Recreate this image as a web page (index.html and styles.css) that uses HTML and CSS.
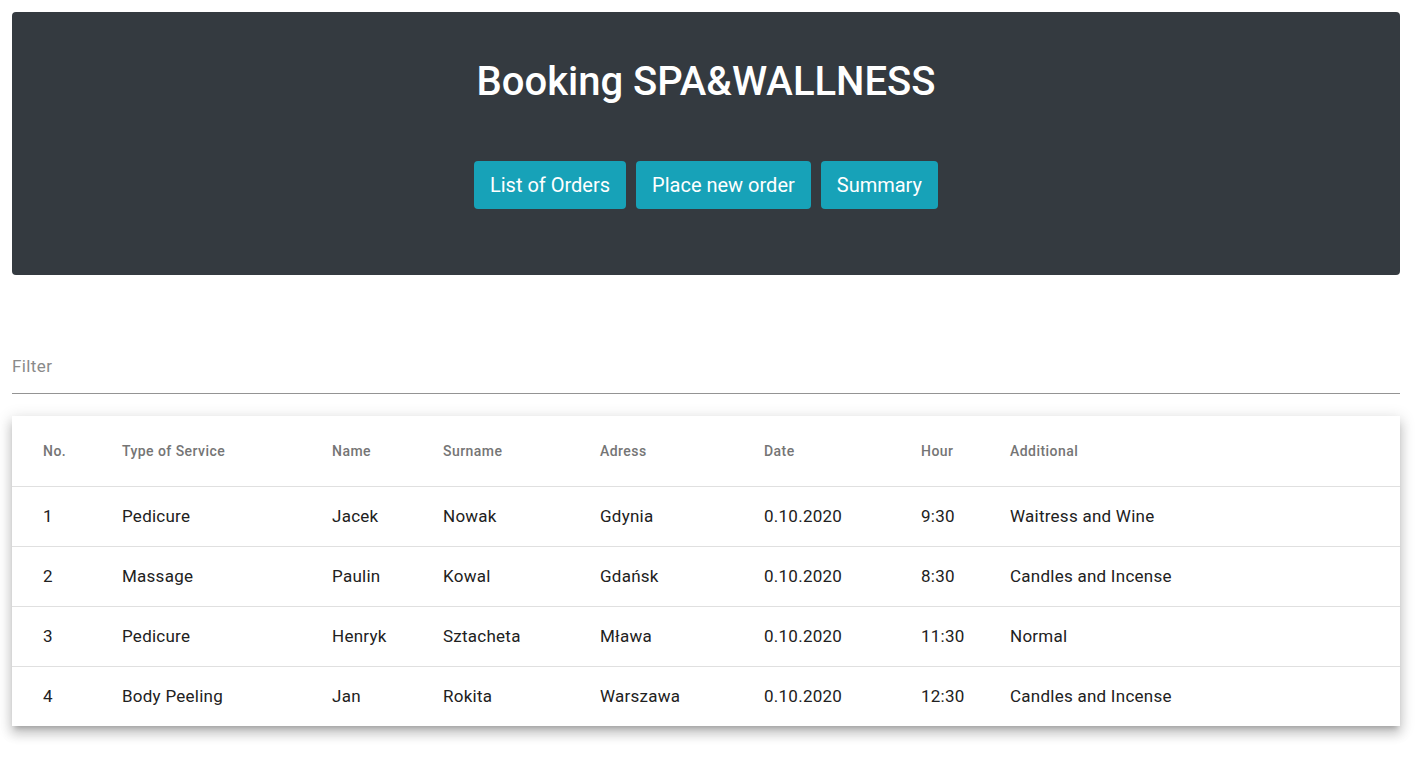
FILE: index.html
```html
<!DOCTYPE html>
<html lang="en">
<head>
<meta charset="utf-8">
<title>Booking SPA&amp;WALLNESS</title>
<link rel="stylesheet" href="styles.css">
</head>
<body>
<div class="page">
  <header class="jumbotron">
    <h1 class="title">Booking SPA&amp;WALLNESS</h1>
    <nav class="actions">
      <button class="btn">List of Orders</button>
      <button class="btn">Place new order</button>
      <button class="btn">Summary</button>
    </nav>
  </header>

  <div class="filter">
    <input class="filter-input" type="text" placeholder="Filter">
  </div>

  <div class="card">
    <table class="orders">
      <thead>
        <tr>
          <th class="c-no">No.</th>
          <th class="c-type">Type of Service</th>
          <th class="c-name">Name</th>
          <th class="c-surname">Surname</th>
          <th class="c-adress">Adress</th>
          <th class="c-date">Date</th>
          <th class="c-hour">Hour</th>
          <th class="c-add">Additional</th>
        </tr>
      </thead>
      <tbody>
        <tr><td>1</td><td>Pedicure</td><td>Jacek</td><td>Nowak</td><td>Gdynia</td><td>0.10.2020</td><td>9:30</td><td>Waitress and Wine</td></tr>
        <tr><td>2</td><td>Massage</td><td>Paulin</td><td>Kowal</td><td>Gdańsk</td><td>0.10.2020</td><td>8:30</td><td>Candles and Incense</td></tr>
        <tr><td>3</td><td>Pedicure</td><td>Henryk</td><td>Sztacheta</td><td>Mława</td><td>0.10.2020</td><td>11:30</td><td>Normal</td></tr>
        <tr><td>4</td><td>Body Peeling</td><td>Jan</td><td>Rokita</td><td>Warszawa</td><td>0.10.2020</td><td>12:30</td><td>Candles and Incense</td></tr>
      </tbody>
    </table>
  </div>
</div>
</body>
</html>
```

FILE: styles.css
```css
* { box-sizing: border-box; }
html, body { margin: 0; padding: 0; background: #fff; }
body {
  font-family: Roboto, "Liberation Sans", Arial, sans-serif;
  color: #212529;
}
.page {
  padding: 12px 15px 40px 12px;
}
.jumbotron {
  background: #343a40;
  border-radius: 4px;
  height: 263px;
  padding-top: 46px;
  display: flex;
  flex-direction: column;
  align-items: center;
}
.title {
  margin: 0;
  color: #fff;
  font-size: 40px;
  font-weight: 500;
  line-height: 48px;
}
.actions {
  margin-top: 55px;
  display: flex;
  gap: 10px;
}
.btn {
  background: #17a2b8;
  color: #fff;
  border: none;
  border-radius: 4px;
  height: 48px;
  padding: 0 16px;
  font-family: inherit;
  font-size: 20px;
  line-height: 48px;
}
.filter {
  margin-top: 76px;
  border-bottom: 1px solid #949494;
  height: 43px;
}
.filter-input {
  width: 100%;
  border: none;
  outline: none;
  padding: 0;
  height: 30px;
  font-family: inherit;
  font-size: 17px;
  letter-spacing: 0.4px;
  color: #212529;
  background: transparent;
}
.filter-input::placeholder { color: #8a8a8a; }
.card {
  margin-top: 22px;
  background: #fff;
  box-shadow: 0 5px 5px -3px rgba(0,0,0,.2), 0 8px 10px 1px rgba(0,0,0,.14), 0 3px 14px 2px rgba(0,0,0,.12);
}
.orders {
  width: 100%;
  border-collapse: collapse;
  table-layout: fixed;
}
.orders th {
  height: 70px;
  text-align: left;
  font-size: 14px;
  letter-spacing: 0.45px;
  font-weight: 500;
  color: #757575;
  border-bottom: 1px solid #e0e0e0;
  padding: 0;
}
.orders td {
  height: 60px;
  font-size: 17px;
  letter-spacing: 0.25px;
  color: #212121;
  border-bottom: 1px solid #e0e0e0;
  padding: 0;
}
.orders tbody tr:last-child td { border-bottom: none; }
.orders th:first-child, .orders td:first-child { padding-left: 31px; }
.c-no { width: 110px; }
.c-type { width: 210px; }
.c-name { width: 111px; }
.c-surname { width: 157px; }
.c-adress { width: 164px; }
.c-date { width: 157px; }
.c-hour { width: 89px; }
```
